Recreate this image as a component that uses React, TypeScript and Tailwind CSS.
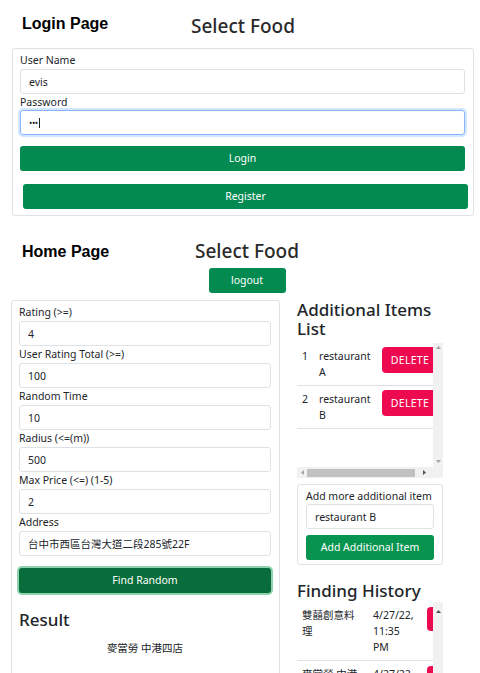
import React from "react";

const SANS = "font-['Noto_Sans','Noto_Sans_CJK_TC',sans-serif]";

function Input({ value }: { value: string }) {
  return (
    <input
      readOnly
      value={value}
      className="block h-[25px] w-full rounded-[3px] border border-[#dee2e6] bg-white px-[8px] text-[10.5px] text-[#212529] outline-none"
    />
  );
}

function Label({ children, className = "" }: { children: React.ReactNode; className?: string }) {
  return <div className={`text-[10.5px] leading-[14px] text-[#212529] ${className}`}>{children}</div>;
}

function Field({ label, value }: { label: string; value: string }) {
  return (
    <div>
      <div className="text-[10.5px] leading-[17px] text-[#212529]">{label}</div>
      <Input value={value} />
    </div>
  );
}

function GreenButton({ children, className = "" }: { children: React.ReactNode; className?: string }) {
  return (
    <button
      className={`flex h-[25px] items-center justify-center rounded-[3px] bg-[#038a50] text-[10.5px] text-white ${className}`}
    >
      {children}
    </button>
  );
}

function Up({ color = "#a3a3a3" }: { color?: string }) {
  return (
    <svg width="5" height="3" viewBox="0 0 5 3">
      <path d="M2.5 0L5 3H0Z" fill={color} />
    </svg>
  );
}
function Down({ color = "#a3a3a3" }: { color?: string }) {
  return (
    <svg width="5" height="3" viewBox="0 0 5 3">
      <path d="M0 0H5L2.5 3Z" fill={color} />
    </svg>
  );
}
function Left() {
  return (
    <svg width="3" height="5" viewBox="0 0 3 5">
      <path d="M0 2.5L3 0V5Z" fill="#a3a3a3" />
    </svg>
  );
}
function Right() {
  return (
    <svg width="3" height="5" viewBox="0 0 3 5">
      <path d="M3 2.5L0 0V5Z" fill="#505050" />
    </svg>
  );
}

export default function App() {
  return (
    <div className={`h-[673px] w-[480px] overflow-hidden bg-white text-[#212529] ${SANS}`}>
      {/* Login page */}
      <div className="grid grid-cols-[143px_200px] items-start pt-[15px]">
        <div className="pl-[22px] font-['Liberation_Sans',Arial,sans-serif] text-[16px] font-bold leading-[18px] text-black">
          Login Page
        </div>
        <div className="text-center text-[19px] font-medium leading-[22px] text-[#2a2a2a]">Select Food</div>
      </div>
      <div className="ml-[12px] mt-[11px] w-[462px] rounded-[3px] border border-[#dee2e6] pb-[6px] pl-[7px] pr-[8px] pt-[4px]">
        <Label className="mb-[2px]">User Name</Label>
        <Input value="evis" />
        <Label className="mb-[1px] mt-[1px]">Password</Label>
        <div className="flex h-[25px] items-center rounded-[3px] border border-[#86b7fe] px-[8px] shadow-[0_0_0_2px_rgba(13,110,253,0.18)]">
          <span className="text-[9px] leading-none tracking-[-0.5px] text-[#212529]">•••</span>
          <span className="ml-[1px] h-[10px] w-px bg-[#212529]" />
        </div>
        <GreenButton className="mt-[11px] w-full">Login</GreenButton>
        <GreenButton className="ml-[3px] mt-[13px] w-[445px]">Register</GreenButton>
      </div>

      {/* Home page */}
      <div className="mt-[24px] grid grid-cols-[147px_200px] items-start">
        <div className="mt-[3px] pl-[22px] font-['Liberation_Sans',Arial,sans-serif] text-[16px] font-bold leading-[18px] text-black">
          Home Page
        </div>
        <div className="text-center text-[19px] font-medium leading-[22px] text-[#2a2a2a]">Select Food</div>
        <div />
        <GreenButton className="mt-[6px] w-[77px] justify-self-center">logout</GreenButton>
      </div>

      <div className="mt-[7px] flex items-start">
        {/* Left card */}
        <div className="ml-[11px] w-[269px] rounded-[3px] border border-[#dee2e6] pb-[40px] pl-[7px] pr-[8px] pt-[3px]">
          <Field label="Rating (>=)" value="4" />
          <Field label="User Rating Total (>=)" value="100" />
          <Field label="Random Time" value="10" />
          <Field label="Radius (<=(m))" value="500" />
          <Field label="Max Price (<=) (1-5)" value="2" />
          <Field label="Address" value="台中市西區台灣大道二段285號22F" />
          <button className="mt-[12px] flex h-[25px] w-full items-center justify-center rounded-[3px] bg-[#086d3b] text-[10.5px] text-white ring-2 ring-[#8fd3ae]">
            Find Random
          </button>
          <div className="mt-[17px] text-[17px] font-medium leading-[19px] text-[#212529]">Result</div>
          <div className="mt-[11px] text-center text-[10.5px] leading-[16px]">麥當勞 中港四店</div>
        </div>

        {/* Right column */}
        <div className="ml-[17px] w-[146px]">
          <div className="text-[17px] font-medium leading-[19px] text-[#212529]">Additional Items List</div>

          <div className="mt-[5px] grid grid-cols-[136px_10px] grid-rows-[124px_11px]">
            <div className="overflow-hidden">
              <table className="w-[146px] table-fixed border-collapse text-[10.5px] leading-[16px]">
                <colgroup>
                  <col className="w-[17px]" />
                  <col className="w-[63px]" />
                  <col className="w-[66px]" />
                </colgroup>
                <tbody>
                  {[
                    ["1", "A"],
                    ["2", "B"],
                  ].map(([n, l]) => (
                    <tr key={n} className="border-b border-[#dee2e6]">
                      <td className="p-[5px] align-top">{n}</td>
                      <td className="p-[5px] align-top">restaurant {l}</td>
                      <td className="px-[5px] pb-[5px] pt-[4px] align-top">
                        <div className="flex h-[26px] w-[56px] items-center justify-center rounded-[4px] bg-[#ee0a4f] text-[10.5px] tracking-[0.3px] text-white">
                          DELETE
                        </div>
                      </td>
                    </tr>
                  ))}
                </tbody>
              </table>
            </div>
            <div className="flex flex-col items-center justify-between bg-[#f1f1f1] pb-[4px] pt-[3px]">
              <Up />
              <Down />
            </div>
            <div className="flex items-center bg-[#f1f1f1]">
              <div className="flex w-[10px] justify-center">
                <Left />
              </div>
              <div className="h-[8px] w-[108px] bg-[#c1c1c1]" />
              <div className="flex flex-1 justify-center">
                <Right />
              </div>
            </div>
            <div className="bg-[#f1f1f1]" />
          </div>

          <div className="mt-[6px] rounded-[3px] border border-[#dee2e6] px-[8px] pb-[4px] pt-[4px]">
            <Label className="mb-[1px]">Add more additional item</Label>
            <Input value="restaurant B" />
            <GreenButton className="mt-[6px] w-full bg-[#07944f]">Add Additional Item</GreenButton>
          </div>

          <div className="mt-[16px] text-[17px] font-medium leading-[19px] text-[#212529]">Finding History</div>

          <div className="mt-[2px] grid grid-cols-[136px_10px]">
            <div className="h-[80px] overflow-hidden">
              <table className="w-[175px] table-fixed border-collapse text-[10.5px] leading-[16px]">
                <colgroup>
                  <col className="w-[71px]" />
                  <col className="w-[54px]" />
                  <col className="w-[50px]" />
                </colgroup>
                <tbody>
                  <tr className="border-b border-[#dee2e6]">
                    <td className="p-[5px] align-top">雙囍創意料理</td>
                    <td className="p-[5px] align-top">4/27/22, 11:35 PM</td>
                    <td className="p-[5px] align-top">
                      <div className="h-[24px] w-[40px] rounded-[4px] bg-[#ee0a4f]" />
                    </td>
                  </tr>
                  <tr>
                    <td className="p-[5px] align-top">麥當勞 中港四店</td>
                    <td className="p-[5px] align-top">4/27/22, 11:30 PM</td>
                    <td className="p-[5px] align-top">
                      <div className="h-[24px] w-[40px] rounded-[4px] bg-[#ee0a4f]" />
                    </td>
                  </tr>
                </tbody>
              </table>
            </div>
            <div className="flex flex-col items-center bg-[#f1f1f1] pt-[8px]">
              <Up color="#505050" />
            </div>
          </div>
        </div>
      </div>
    </div>
  );
}
